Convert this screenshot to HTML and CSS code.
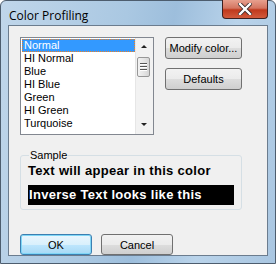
FILE: index.html
```
<!DOCTYPE html>
<html lang="en">
<head>
<meta charset="UTF-8" />
<title>Color Profiling</title>
<link rel="stylesheet" href="styles.css">
</head>
<body>

<div class="window">
  <div class="titlebar">
    <span class="title">Color Profiling</span>
    <div class="close">
      <svg width="14" height="12" viewBox="0 0 14 12">
        <path d="M2 1 L12 11 M12 1 L2 11" stroke="#3a2a2a" stroke-width="4" stroke-linecap="square"/>
        <path d="M2 1 L12 11 M12 1 L2 11" stroke="#ffffff" stroke-width="2.4" stroke-linecap="square"/>
      </svg>
    </div>
  </div>

  <div class="client">
    <div class="top-row">
      <div class="listbox">
        <ul class="items">
          <li class="selected">Normal</li>
          <li>HI Normal</li>
          <li>Blue</li>
          <li>HI Blue</li>
          <li>Green</li>
          <li>HI Green</li>
          <li>Turquoise</li>
        </ul>
        <div class="scrollbar">
          <div class="arrow up"></div>
          <div class="track">
            <div class="thumb"><span></span><span></span><span></span></div>
          </div>
          <div class="arrow down"></div>
        </div>
      </div>
      <div class="side-buttons">
        <button class="btn">Modify color...</button>
        <button class="btn">Defaults</button>
      </div>
    </div>

    <fieldset class="sample">
      <legend>Sample</legend>
      <div class="normal-text">Text will appear in this color</div>
      <div class="inverse-text">Inverse Text looks like this</div>
    </fieldset>

    <div class="bottom-row">
      <button class="btn default">OK</button>
      <button class="btn">Cancel</button>
    </div>
  </div>
</div>

</body>
</html>
```

FILE: styles.css
```
body {
  margin: 0; width: 276px; height: 264px; overflow: hidden;
  font-family: "Liberation Sans", Arial, sans-serif; font-size: 11px;
}
.window {
  box-sizing: border-box; width: 276px; height: 264px;
  border: 1px solid #4d5d6e; border-radius: 6px 6px 0 0;
  background: linear-gradient(100deg, #c0d6ea 0%, #aac8e2 40%, #9dbedc 55%, #b9d3ea 75%, #a9c6e1 100%);
  padding: 0 7px 7px 7px;
  display: flex; flex-direction: column;
}
.titlebar {
  height: 29px; display: flex; justify-content: space-between; align-items: flex-start;
}
.title {
  font-family: "Open Sans", "Noto Sans", sans-serif; font-size: 12px; color: #000;
  margin-top: 6px; margin-left: 1px;
}
.close {
  width: 44px; height: 18px; margin-top: -1px; margin-right: 0;
  border: 1px solid #3e2020; border-top: none; border-radius: 0 0 4px 4px;
  background: linear-gradient(#e7a08e 0%, #d47561 45%, #c0391d 55%, #d25a3c 100%);
  display: flex; align-items: center; justify-content: center;
}
.client {
  flex: 1; background: #f0f0f0; border: 1px solid #6b7c8e;
  padding: 11px 10px 0 11px; display: flex; flex-direction: column;
}
.top-row {
  display: flex; gap: 11px;
}
.listbox {
  width: 134px; height: 98px; box-sizing: border-box;
  border: 1px solid #828790; background: #fff; display: flex;
}
.items {
  list-style: none; margin: 0; padding: 1px 0 0 1px; flex: 1;
}
.items li {
  height: 13px; line-height: 13px; padding-left: 2px; color: #000;
}
.items li.selected {
  background: #3399ff; color: #fff; outline: 1px dotted #f08020; outline-offset: -1px;
}
.scrollbar {
  width: 17px; display: flex; flex-direction: column; background: #f2f2f2;
  border-left: 1px solid #e6e6e6;
}
.arrow {
  height: 17px; position: relative;
}
.arrow::after {
  content: ""; position: absolute; left: 5px; top: 7px;
  border-left: 3px solid transparent; border-right: 3px solid transparent;
}
.arrow.up::after { border-bottom: 3px solid #222; }
.arrow.down::after { border-top: 3px solid #222; top: 6px; }
.track { flex: 1; }
.thumb {
  margin: 2px 0 0 1px; width: 13px; height: 20px; box-sizing: border-box;
  border: 1px solid #979797; border-radius: 2px;
  background: linear-gradient(90deg, #f3f3f3, #e3e3e3 60%, #d6d6d6);
  display: flex; flex-direction: column; align-items: center; justify-content: center; gap: 1px;
}
.thumb span { width: 7px; height: 1px; background: #555; border-bottom: 1px solid #fff; }
.side-buttons {
  display: flex; flex-direction: column; gap: 9px;
}
.btn {
  width: 77px; height: 22px; box-sizing: border-box; padding: 0;
  border: 1px solid #707070; border-radius: 3px;
  background: linear-gradient(#f2f2f2 0%, #ebebeb 50%, #dddddd 51%, #cfcfcf 100%);
  font-family: "Liberation Sans", Arial, sans-serif; font-size: 11px; color: #000;
}
.btn.default {
  border-color: #3c7fb1;
  background: linear-gradient(#eaf6fd 0%, #d9f0fc 50%, #bee6fd 51%, #a7d9f5 100%);
  box-shadow: inset 0 0 0 1px #7fd6f6;
}
.sample {
  margin: 14px 15px 0 0; padding: 0 7px 4px 7px;
  border: 1px solid #d5dfe5; border-radius: 3px;
}
.sample legend {
  padding: 0 1px; margin-left: 1px; color: #000;
}
.normal-text {
  font-weight: bold; font-size: 13px; letter-spacing: 0.3px; color: #000;
  height: 17px; line-height: 17px; margin-top: 1px;
}
.inverse-text {
  font-weight: bold; font-size: 13px; letter-spacing: 0.3px;
  background: #000; color: #fff; height: 20px; line-height: 20px;
  margin-top: 6px; padding-left: 1px;
}
.bottom-row {
  display: flex; gap: 9px; margin-top: 24px;
}
.bottom-row .btn { width: 72px; height: 21px; }
```
